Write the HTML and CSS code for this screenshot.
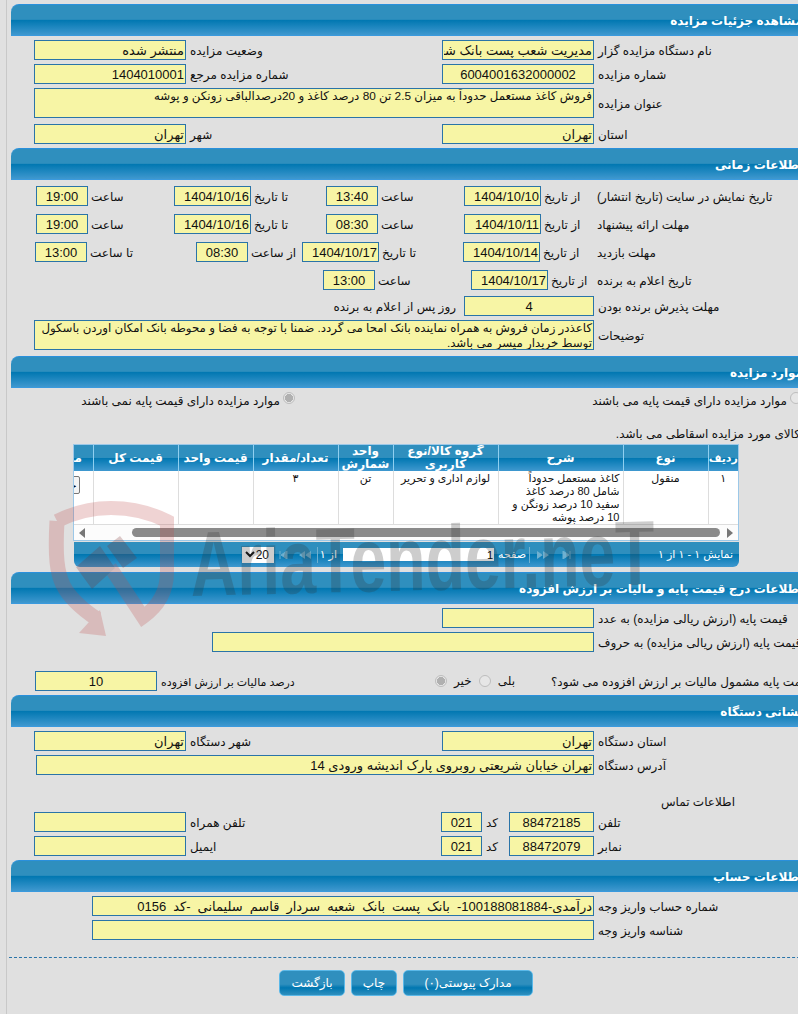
FILE: index.html
```html
<!DOCTYPE html>
<html lang="fa">
<head>
    <meta charset="UTF-8">
    <title>مشاهده جزئیات مزایده</title>
    <link rel="stylesheet" href="styles.css">
</head>
<body>
<div class="wrap">
    <div class="page" dir="rtl">

        <h2 class="head">مشاهده جزئیات مزایده</h2>
        <div class="sec">
            <div class="row r-form">
                <label>نام دستگاه مزایده گزار</label>
                <input class="fld" readonly value="مدیریت شعب پست بانک شعبه سردار قاسم سلیمانی">
                <label>وضعیت مزایده</label>
                <input class="fld" readonly value="منتشر شده">
            </div>
            <div class="row r-form">
                <label>شماره مزایده</label>
                <input class="fld mid" readonly value="6004001632000002">
                <label>شماره مزایده مرجع</label>
                <input class="fld" readonly value="1404010001">
            </div>
            <div class="row r-wide">
                <label>عنوان مزایده</label>
                <textarea class="fld h30" readonly>فروش کاغذ مستعمل حدوداً به میزان 2.5 تن 80 درصد کاغذ و 20درصدالباقی زونکن و پوشه</textarea>
            </div>
            <div class="row r-form mt2">
                <label>استان</label>
                <input class="fld" readonly value="تهران">
                <label>شهر</label>
                <input class="fld" readonly value="تهران">
            </div>
        </div>

        <h2 class="head">اطلاعات زمانی</h2>
        <div class="sec sec-time">
            <div class="row r-time mb4">
                <label>تاریخ نمایش در سایت (تاریخ انتشار)</label>
                <label>از تاریخ</label>
                <input class="fld" readonly value="1404/10/10">
                <label>ساعت</label>
                <input class="fld mid" readonly value="13:40">
                <label>تا تاریخ</label>
                <input class="fld" readonly value="1404/10/16">
                <label>ساعت</label>
                <input class="fld mid" readonly value="19:00">
            </div>
            <div class="row r-time mb4">
                <label>مهلت ارائه پیشنهاد</label>
                <label>از تاریخ</label>
                <input class="fld" readonly value="1404/10/11">
                <label>ساعت</label>
                <input class="fld mid" readonly value="08:30">
                <label>تا تاریخ</label>
                <input class="fld" readonly value="1404/10/16">
                <label>ساعت</label>
                <input class="fld mid" readonly value="19:00">
            </div>
            <div class="row r-visit mb4">
                <label>مهلت بازدید</label>
                <label>از تاریخ</label>
                <input class="fld" readonly value="1404/10/14">
                <label>تا تاریخ</label>
                <input class="fld" readonly value="1404/10/17">
                <label>از ساعت</label>
                <input class="fld mid" readonly value="08:30">
                <label>تا ساعت</label>
                <input class="fld mid" readonly value="13:00">
            </div>
            <div class="row r-notify mb2">
                <label>تاریخ اعلام به برنده</label>
                <label>از تاریخ</label>
                <input class="fld" readonly value="1404/10/17">
                <label>ساعت</label>
                <input class="fld mid" readonly value="13:00">
            </div>
            <div class="row r-days">
                <label>مهلت پذیرش برنده بودن</label>
                <input class="fld mid" readonly value="4">
                <span class="after">روز پس از اعلام به برنده</span>
            </div>
            <div class="row r-wide">
                <label>توضیحات</label>
                <textarea class="fld h30" readonly>کاعذدر زمان فروش به همراه نماینده بانک امحا می گردد. ضمنا با توجه به فضا و محوطه بانک امکان اوردن باسکول توسط خریدار میسر می باشد.</textarea>
            </div>
        </div>

        <h2 class="head">موارد مزایده</h2>
        <div class="sec-items">
            <div class="radios">
                <div class="opt opt-a"><input class="radio" type="radio" disabled><span>موارد مزایده دارای قیمت پایه می باشند</span></div>
                <div class="opt"><input class="radio" type="radio" disabled checked><span>موارد مزایده دارای قیمت پایه نمی باشند</span></div>
            </div>
            <p class="note">کالای مورد مزایده اسقاطی می باشد.</p>
            <div class="grid">
                <div class="grid-clip">
                    <table class="tbl">
                        <thead>
                            <tr>
                                <th class="c-idx">ردیف</th>
                                <th class="c-type">نوع</th>
                                <th class="c-desc">شرح</th>
                                <th class="c-group">گروه کالا/نوع کاربری</th>
                                <th class="c-unit">واحد شمارش</th>
                                <th class="c-qty">تعداد/مقدار</th>
                                <th class="c-price">قیمت واحد</th>
                                <th class="c-total">قیمت کل</th>
                                <th class="c-docs">مدارک</th>
                            </tr>
                        </thead>
                        <tbody>
                            <tr>
                                <td>۱</td>
                                <td>منقول</td>
                                <td class="desc">کاغذ مستعمل حدوداً شامل 80 درصد کاغذ سفید 10 درصد زونگن و 10 درصد پوشه</td>
                                <td>لوازم اداری و تحریر</td>
                                <td>تن</td>
                                <td>۳</td>
                                <td></td>
                                <td></td>
                                <td class="docs"><button class="mini" type="button">جزئیات</button></td>
                            </tr>
                        </tbody>
                    </table>
                </div>
                <div class="hscroll">
                    <span class="arr arr-r"></span>
                    <span class="thumb"></span>
                    <span class="arr arr-l"></span>
                </div>
            </div>
            <div class="pager">
                <span class="pg-info">نمایش ۱ - ۱ از ۱</span>
                <span class="pg-nav">
                    <svg width="9" height="8" viewBox="0 0 9 8"><path d="M8 0v8M7 4 1 0v8z" fill="#6fb0d0" stroke="#6fb0d0"/></svg>
                    <svg width="12" height="8" viewBox="0 0 12 8"><path d="M6 4 0 0v8zM12 4 6 0v8z" fill="#6fb0d0"/></svg>
                </span>
                <span class="pg-sep"></span>
                <span class="pg-page">صفحه</span>
                <input class="pg-input" readonly value="1">
                <span class="pg-of">از ۱</span>
                <span class="pg-sep"></span>
                <span class="pg-nav pg-nav-b">
                    <svg width="12" height="8" viewBox="0 0 12 8"><path d="M0 4l6-4v8zM6 4l6-4v8z" fill="#6fb0d0"/></svg>
                    <svg width="9" height="8" viewBox="0 0 9 8"><path d="M1 0v8M2 4l6-4v8z" fill="#6fb0d0" stroke="#6fb0d0"/></svg>
                </span>
                <div class="pg-size">
                    <span>20</span>
                    <svg width="10" height="7" viewBox="0 0 10 7"><path d="M1 1l4 4 4-4" fill="none" stroke="#111" stroke-width="2"/></svg>
                </div>
            </div>
        </div>

        <h2 class="head">اطلاعات درج قیمت پایه و مالیات بر ارزش افزوده</h2>
        <div class="sec">
            <div class="row r-price">
                <label>قیمت پایه (ارزش ریالی مزایده) به عدد</label>
                <input class="fld" readonly>
            </div>
            <div class="row r-words">
                <label>قیمت پایه (ارزش ریالی مزایده) به حروف</label>
                <input class="fld" readonly>
            </div>
            <div class="row r-vat">
                <label>قیمت پایه مشمول مالیات بر ارزش افزوده می شود؟</label>
                <div class="yesno">
                    <span>بلی</span><input class="radio" type="radio" disabled>
                    <span>خیر</span><input class="radio" type="radio" disabled checked>
                </div>
                <label class="tight">درصد مالیات بر ارزش افزوده</label>
                <input class="fld mid" readonly value="10">
            </div>
        </div>

        <h2 class="head">نشانی دستگاه</h2>
        <div class="sec">
            <div class="row r-form">
                <label>استان دستگاه</label>
                <input class="fld" readonly value="تهران">
                <label>شهر دستگاه</label>
                <input class="fld" readonly value="تهران">
            </div>
            <div class="row r-addr">
                <label>آدرس دستگاه</label>
                <input class="fld" readonly value="تهران خیابان شریعتی روبروی پارک اندیشه ورودی 14">
            </div>
            <div class="contact-title">اطلاعات تماس</div>
            <div class="row r-phone">
                <label>تلفن</label>
                <input class="fld mid" readonly value="88472185">
                <label>کد</label>
                <input class="fld mid" readonly value="021">
                <label>تلفن همراه</label>
                <input class="fld" readonly>
            </div>
            <div class="row r-phone">
                <label>نمابر</label>
                <input class="fld mid" readonly value="88472079">
                <label>کد</label>
                <input class="fld mid" readonly value="021">
                <label>ایمیل</label>
                <input class="fld" readonly>
            </div>
        </div>

        <h2 class="head">اطلاعات حساب</h2>
        <div class="sec">
            <div class="row r-acc">
                <label>شماره حساب واریز وجه</label>
                <input class="fld spaced" readonly value="درآمدی-100188081884- بانک پست بانک شعبه سردار قاسم سلیمانی -کد 0156">
            </div>
            <div class="row r-acc">
                <label>شناسه واریز وجه</label>
                <input class="fld" readonly>
            </div>
        </div>

        <div class="actions">
            <button class="btn b-docs" type="button">مدارک پیوستی(۰)</button>
            <button class="btn b-print" type="button">چاپ</button>
            <button class="btn b-back" type="button">بازگشت</button>
        </div>
    </div>
</div>

<!-- watermark sits over the whole form -->
<div class="mark">
    <svg class="mark-logo" width="140" height="150" viewBox="0 0 140 150">
        <path d="M10 24C30 14 50 11 64 11c16 0 36 3 56 13v51c0 20-10 35-24 45L63 70" fill="none" stroke="#c04a4a" stroke-width="14"/>
        <path d="M10 24C8 60 10 75 16 88c6 12 19 24 34 34" fill="none" stroke="#c04a4a" stroke-width="15"/>
        <path d="M53 113l6 26-27-3z" fill="#c04a4a"/>
        <path d="M29 70 53 49 68 71 45 92zM60 49 73 39 90 61 76 71z" fill="#7a2c2c"/>
    </svg>
    <div class="mark-text">AriaTender.neT</div>
</div>
</body>
</html>
```
FILE: styles.css
```css
html, body {
    margin: 0;
    padding: 0;
    height: 100%;
    overflow: hidden;
}
body {
    background-color: #e0e0e0;
    font-family: "Liberation Sans", "DejaVu Sans", sans-serif;
    font-size: 12px;
    color: #111;
}
.wrap {
    position: relative;
    margin-left: 6px;
    padding-left: 4px;
    border-left: 1px solid #c8c8c8;
    height: 1014px;
}
.page {
    width: 819px;
    padding-top: 4px;
}

/* section bars */
.head {
    margin: 0;
    height: 32px;
    box-sizing: border-box;
    padding-right: 27px;
    line-height: 32px;
    font-size: 12px;
    font-weight: bold;
    color: #fff;
    border-top: 1px solid #2a90dc;
    border-bottom: 1px solid #3a9ade;
    border-top-left-radius: 8px;
    background: linear-gradient(#2f8fbe 0, #2f8fbe 48%, #0077b1 50%, #3f98cf 100%);
}
.sec {
    display: flex;
    flex-direction: column;
    gap: 4px;
    padding: 4px 0;
}
.sec-time {
    padding: 6px 0;
}
.row {
    display: grid;
    align-items: center;
}
.row label {
    text-align: left;
    padding-left: 4px;
    padding-top: 2px;
    white-space: nowrap;
}
.row .tight { font-size: 11px; }
.mt2 { margin-top: 2px; }
.mb4 { margin-bottom: 4px; }
.mb2 { margin-bottom: 2px; }

/* inputs */
.fld {
    display: block;
    box-sizing: border-box;
    width: 100%;
    height: 20px;
    margin: 0;
    padding: 0 1px;
    border: 1px solid #2a74a8;
    border-radius: 0;
    outline: none;
    background-color: #f7f5a5;
    color: #111;
    font-family: inherit;
    font-size: 13px;
    text-align: right;
}
.mid { text-align: center; }
.spaced { word-spacing: 3.4px; }
textarea.fld {
    resize: none;
    overflow: hidden;
    font-size: 11.8px;
    line-height: 15px;
}
.h30 { height: 30px; }

/* column sets per row type, first column is on the right */
.r-form { grid-template-columns: 236px 152px 256px 152px; }
.r-wide { grid-template-columns: 236px 560px; }
.r-time { grid-template-columns: 236px 53px 77px 86px 52px 75px 77px 86px 52px; }
.r-visit { grid-template-columns: 236px 54px 77px 84px 77px 54px 52px 109px 52px; }
.r-notify { grid-template-columns: 236px 46px 77px 96px 52px; }
.r-days { grid-template-columns: 236px 130px auto; }
.r-price { grid-template-columns: 236px 152px; }
.r-words { grid-template-columns: 236px 382px; }
.r-vat { grid-template-columns: 283px 252px 138px 122px; margin-top: 15px; }
.r-addr { grid-template-columns: 236px 558px; }
.r-phone { grid-template-columns: 236px 85px 27px 41px 255px 152px; }
.r-acc { grid-template-columns: 236px 502px; }
.r-time label, .r-visit label, .r-notify label { padding-left: 3px; }
.after { padding-right: 8px; padding-top: 2px; }

.yesno {
    display: flex;
    align-items: center;
    gap: 7px;
    padding-right: 32px;
}
.radio {
    appearance: none;
    flex: none;
    width: 12px;
    height: 12px;
    margin: 0;
    border: 1px solid #bdbdbd;
    border-radius: 50%;
    background-color: #e6e6e6;
}
.radio:checked {
    background: radial-gradient(circle, #b0b0b0 0, #b0b0b0 55%, #e6e6e6 60%);
}

/* items */
.sec-items {
    padding-top: 4px;
}
.radios {
    display: grid;
    grid-template-columns: 535px auto;
    height: 16px;
    line-height: 16px;
}
.opt {
    display: flex;
    gap: 3px;
    align-items: flex-start;
}
.opt span { padding-top: 1px; }
.opt-a { padding-right: 28px; }
.note {
    margin: 18px 30px 2px 0;
    height: 16px;
    line-height: 16px;
}
.grid {
    box-sizing: border-box;
    width: 666px;
    margin-right: 91px;
    border: 1px solid #9cc8e8;
    background-color: #fff;
}
.grid-clip {
    overflow: hidden;
}
.tbl {
    table-layout: fixed;
    width: 705px;
    border-collapse: collapse;
}
.tbl th {
    height: 26px;
    padding: 0;
    box-sizing: border-box;
    font-size: 12px;
    line-height: 13px;
    color: #fff;
    border-left: 1px solid #8fcff0;
    background: linear-gradient(#2f8fbe 0, #2f8fbe 48%, #0077b1 50%, #3f98cf 100%);
}
.tbl th.c-idx { font-size: 11px; }
.tbl td {
    height: 53px;
    padding: 1px 3px 0;
    box-sizing: border-box;
    vertical-align: top;
    text-align: center;
    font-size: 11px;
    line-height: 13px;
    border-left: 1px solid #ddd;
}
.tbl td.desc { text-align: right; }
.c-idx { width: 30px; }
.c-type { width: 85px; }
.c-desc { width: 125px; }
.c-group { width: 105px; }
.c-unit { width: 55px; }
.c-qty { width: 85px; }
.c-price { width: 75px; }
.c-total { width: 85px; }
.c-docs { width: 60px; }
.tbl td.docs { text-align: right; padding-right: 13px; }
.mini {
    margin-top: 4px;
    padding: 0 2px;
    height: 18px;
    background-color: #f4f4f4;
    border: 1px solid #777;
    border-radius: 2px;
    font-family: inherit;
    font-size: 11px;
    white-space: nowrap;
}
.hscroll {
    display: flex;
    align-items: center;
    height: 15px;
    padding: 0 5px;
    border-top: 1px solid #ddd;
    background-color: #fcfcfc;
}
.thumb {
    flex: 1;
    height: 9px;
    margin: 0 7px 0 47px;
    border-radius: 5px;
    background-color: #8a8a8a;
}
.arr {
    width: 0;
    height: 0;
    border-top: 5px solid transparent;
    border-bottom: 5px solid transparent;
}
.arr-r { border-left: 6px solid #777; }
.arr-l { border-right: 6px solid #777; }

.pager {
    display: flex;
    align-items: center;
    box-sizing: border-box;
    width: 665px;
    height: 25px;
    margin: 1px 91px 5px 0;
    padding-right: 6px;
    color: #fff;
    font-size: 11px;
    border-radius: 0 0 6px 6px;
    background: linear-gradient(#2f8fbe 0, #2f8fbe 48%, #0077b1 50%, #3f98cf 100%);
}
.pg-info { width: 162px; }
.pg-nav {
    display: flex;
    gap: 13px;
    direction: ltr;
    flex-direction: row-reverse;
    align-items: center;
    width: 38px;
}
.pg-nav-b {
    gap: 11px;
    width: 32px;
    padding-right: 3px;
}
.pg-sep {
    width: 1px;
    height: 16px;
    margin: 0 3px;
    background-color: #6fb0d0;
}
.pg-page { width: 28px; padding-left: 4px; white-space: nowrap; }
.pg-of { width: 16px; padding-right: 6px; white-space: nowrap; }
.pg-input {
    box-sizing: border-box;
    width: 151px;
    height: 13px;
    padding: 0 1px;
    border: 0;
    outline: none;
    background-color: #fff;
    font-family: inherit;
    font-size: 11px;
}
.pg-size {
    display: flex;
    align-items: center;
    justify-content: space-between;
    box-sizing: border-box;
    width: 32px;
    height: 16px;
    margin-right: 5px;
    padding: 0 5px 0 3px;
    background-color: #fff;
    color: #111;
    font-size: 12px;
}

.contact-title {
    margin: 15px 0 -2px;
    padding-right: 95px;
    height: 16px;
    line-height: 16px;
}

/* bottom buttons */
.actions {
    display: flex;
    gap: 6px;
    margin: 13px 0 0 -2px;
    padding: 12px 297px 0 0;
    border-top: 1px dashed #2a74a8;
}
.btn {
    height: 26px;
    padding: 0;
    border: 1px solid #5ab8e8;
    border-radius: 5px;
    color: #fff;
    font-family: inherit;
    font-size: 12px;
    background: linear-gradient(#2f8fbe 0, #2f8fbe 55%, #0077b1 70%, #2f8fbe 100%);
}
.b-docs { width: 130px; }
.b-print { width: 46px; }
.b-back { width: 66px; }

/* watermark */
.mark {
    position: absolute;
    left: 0;
    top: 0;
    width: 798px;
    height: 1014px;
    overflow: hidden;
    pointer-events: none;
}
.mark-logo {
    position: absolute;
    left: 47px;
    top: 497px;
    opacity: 0.24;
}
.mark-text {
    position: absolute;
    left: 190px;
    top: 518px;
    font-size: 92px;
    line-height: 92px;
    font-weight: bold;
    white-space: nowrap;
    color: #333;
    opacity: 0.24;
    transform-origin: left top;
    transform: scaleX(0.7) rotate(-1deg);
}
```
